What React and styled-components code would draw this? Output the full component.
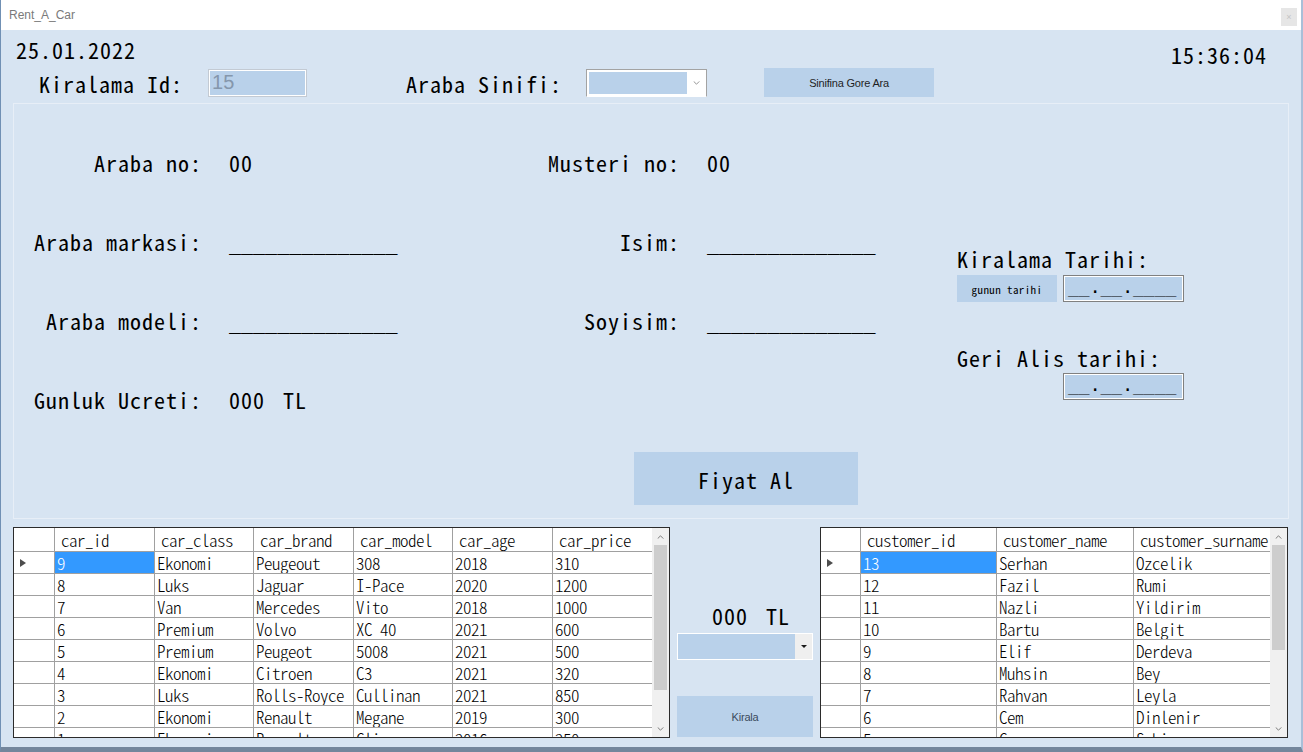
import React from 'react';
import styled, { createGlobalStyle, css } from 'styled-components';

const MONO = `"Noto Sans CJK JP", "DejaVu Sans Mono", monospace`;
const LINE_MONO = `"DejaVu Sans Mono", "Liberation Mono", monospace`;
const SANS = `"Liberation Sans", Arial, sans-serif`;

const GlobalStyle = createGlobalStyle`
  html, body { margin: 0; padding: 0; background: #ffffff; }
  body { font-family: ${SANS}; }
  #root { width: 1303px; height: 752px; }
  *, *::before, *::after { box-sizing: border-box; }
`;

const monoText = css`
  font-family: ${MONO};
  font-feature-settings: "hwid" 1;
  color: #000;
  white-space: pre;
`;

const Window = styled.div`
  width: 1303px;
  height: 752px;
  display: flex;
  flex-direction: column;
  border-left: 1px solid #7090b4;
  border-right: 2px solid #a9bfd8;
  border-bottom: 5px solid #74869c;
  overflow: hidden;
`;

const TitleBar = styled.div`
  height: 30px;
  flex-shrink: 0;
  display: flex;
  align-items: flex-start;
  background: #ffffff;
  padding-left: 8px;
`;

const TitleText = styled.span`
  font-family: ${SANS};
  font-size: 12px;
  line-height: 30px;
  color: #7a7a7a;
`;

const CloseBox = styled.div`
  margin-left: auto;
  margin-right: 4px;
  margin-top: 8px;
  width: 16px;
  height: 18px;
  background: #e6e6e6;
  color: #c4c4c4;
  font-size: 9px;
  line-height: 18px;
  text-align: center;
  font-family: ${SANS};
`;

const Client = styled.div`
  flex: 1;
  background: #d7e4f2;
  display: flex;
  flex-direction: column;
`;

const HeaderTop = styled.div`
  display: flex;
  align-items: flex-start;
  height: 30px;
  padding: 8px 34px 0 15px;
`;

const FormLabel = styled.span`
  ${monoText};
  display: block;
  font-size: 22px;
  line-height: 22px;
  letter-spacing: 1px;
  ${(p) => p.$offset !== undefined && css`margin-left: ${p.$offset}px;`}
  ${(p) => p.$wide && css`word-spacing: 6px;`}
`;

const Clock = styled(FormLabel)`
  margin-left: auto;
  margin-top: 5px;
`;

const ControlRow = styled.div`
  display: flex;
  align-items: center;
  height: 29px;
  margin-top: 8px;
  padding-left: 38px;
`;

const IdBox = styled.div`
  margin-left: 25px;
  width: 99px;
  height: 28px;
  border: 1px solid #c3cad3;
  box-shadow: inset 0 0 0 1px #ffffff;
  background: #b9d1ea;
  padding: 0 3px;
  font-family: ${SANS};
  font-size: 20px;
  line-height: 25px;
  color: #8597ac;
`;

const HeaderCombo = styled.div`
  margin-left: 24px;
  width: 121px;
  height: 28px;
  display: flex;
  border: 1px solid #a3a3a3;
  border-bottom-color: #ffffff;
  background: #ffffff;
  padding: 2px 1px 2px 2px;
`;

const ComboField = styled.div`
  flex: 1;
  background: #b9d1ea;
`;

const ComboArrow = styled.div`
  width: 18px;
  display: flex;
  align-items: center;
  justify-content: center;
`;

const ActionButton = styled.button`
  border: none;
  padding: 0;
  margin: 0;
  background: #b9d1ea;
  width: ${(p) => p.$w}px;
  height: ${(p) => p.$h}px;
  margin-left: ${(p) => p.$ml || 0}px;
  font-family: ${SANS};
  font-size: 11px;
  color: #1f1f1f;
  letter-spacing: -0.2px;
  display: flex;
  align-items: center;
  justify-content: center;
  flex-shrink: 0;
`;

const Panel = styled.div`
  margin: 6px 12px 0 12px;
  height: 416px;
  border: 1px solid #e7eef7;
  padding-top: 47px;
  display: flex;
  flex-direction: column;
`;

const FieldsGrid = styled.div`
  display: grid;
  grid-template-columns: 188px 218px 260px 250px 1fr;
  grid-template-rows: 79px 79px 79px 22px;
`;

const FieldLabel = styled(FormLabel)`
  text-align: right;
`;

const FieldValue = styled(FormLabel)`
  padding-left: 27px;
`;

const BlankValue = styled(FieldValue)`
  font-family: ${LINE_MONO};
  font-feature-settings: normal;
  font-size: 20px;
  letter-spacing: 0;
  line-height: 22px;
  padding-top: 2px;
`;

const DateColumn = styled.div`
  grid-column: 5;
  grid-row: 1 / 5;
  padding-left: 27px;
  display: flex;
  flex-direction: column;
`;

const DateLabel = styled(FormLabel)`
  margin-top: ${(p) => p.$top}px;
`;

const DateRow = styled.div`
  display: flex;
  margin-top: ${(p) => p.$top}px;
  padding-left: ${(p) => p.$indent || 0}px;
`;

const TodayButton = styled.button`
  ${monoText};
  border: none;
  padding: 0;
  width: 100px;
  height: 27px;
  background: #b9d1ea;
  font-size: 11px;
  letter-spacing: 0.4px;
  margin-right: 6px;
`;

const MaskedBox = styled.div`
  font-family: ${LINE_MONO};
  color: #000;
  white-space: pre;
  width: 121px;
  height: 27px;
  border: 1px solid #808080;
  box-shadow: inset 0 0 0 1px #ffffff;
  background: #b9d1ea;
  font-size: 18px;
  line-height: 22px;
  letter-spacing: 0;
  padding-left: 4px;
  overflow: hidden;
`;

const PriceButton = styled.button`
  ${monoText};
  border: none;
  padding: 0;
  margin: 42px 0 0 620px;
  width: 224px;
  height: 53px;
  background: #b9d1ea;
  font-size: 22px;
  letter-spacing: 1px;
`;

const BottomRow = styled.div`
  display: flex;
  gap: 7px;
  margin-top: 8px;
  padding-left: 12px;
  height: 211px;
`;

const GridFrame = styled.div`
  width: ${(p) => p.$w}px;
  height: 211px;
  border: 1px solid #2b2b2b;
  background: #ffffff;
  display: flex;
  overflow: hidden;
  flex-shrink: 0;
`;

const GridTable = styled.div`
  flex: 1;
  display: flex;
  flex-direction: column;
  overflow: hidden;
`;

const GridRow = styled.div`
  display: grid;
  grid-template-columns: ${(p) => p.$template};
  height: ${(p) => (p.$header ? 24 : 22)}px;
  flex-shrink: 0;
`;

const cellBase = css`
  ${monoText};
  font-size: 17px;
  font-weight: 300;
  letter-spacing: -0.5px;
  border-bottom: 1px solid #a0a0a0;
  overflow: hidden;
`;

const HeaderCell = styled.div`
  ${cellBase};
  line-height: 23px;
  padding-left: 6px;
  border-left: 1px solid #a0a0a0;
`;

const CornerCell = styled.div`
  border-bottom: 1px solid #a0a0a0;
`;

const RowHeaderCell = styled.div`
  border-bottom: 1px solid #a0a0a0;
  display: flex;
  align-items: center;
  padding-left: 6px;
`;

const CurrentMarker = styled.span`
  width: 0;
  height: 0;
  border-left: 6px solid #4d4d4d;
  border-top: 4.5px solid transparent;
  border-bottom: 4.5px solid transparent;
`;

const DataCell = styled.div`
  ${cellBase};
  line-height: 21px;
  padding-left: 2px;
  border-left: 1px solid #a0a0a0;
  ${(p) =>
    p.$selected &&
    css`
      background: #3399ff;
      color: #ffffff;
    `}
`;

const VScroll = styled.div`
  width: 17px;
  flex-shrink: 0;
  background: #f0f0f0;
  display: flex;
  flex-direction: column;
`;

const ScrollArrow = styled.div`
  height: 17px;
  display: flex;
  align-items: center;
  justify-content: center;
  flex-shrink: 0;
`;

const ScrollTrack = styled.div`
  flex: 1;
  padding: 0 2px;
`;

const ScrollThumb = styled.div`
  background: #cdcdcd;
`;

const MiddleColumn = styled.div`
  width: 136px;
  display: flex;
  flex-direction: column;
  padding-top: 77px;
  padding-bottom: 1px;
`;

const MiddlePrice = styled(FormLabel)`
  padding-left: 35px;
`;

const FlatCombo = styled.div`
  margin-top: 7px;
  height: 27px;
  display: flex;
  border: 1px solid #ffffff;
  background: #b9d1ea;
`;

const FlatComboArrow = styled.div`
  width: 17px;
  margin-left: auto;
  background: #efefef;
  display: flex;
  align-items: center;
  justify-content: center;
`;

const TinyTriangle = styled.span`
  width: 0;
  height: 0;
  border-top: 3px solid #1a1a1a;
  border-left: 3px solid transparent;
  border-right: 3px solid transparent;
`;

const RentButton = styled(ActionButton)`
  margin-top: auto;
  width: 136px;
  color: #3b4a5c;
  font-size: 11px;
`;

const Chevron = ({ dir = 'down', color = '#606060', w = 8, h = 5 }) => (
  <svg width={w} height={h} viewBox="0 0 8 5">
    {dir === 'down' ? (
      <polyline points="0.5,0.5 4,4 7.5,0.5" fill="none" stroke={color} strokeWidth="1" />
    ) : (
      <polyline points="0.5,4.5 4,1 7.5,4.5" fill="none" stroke={color} strokeWidth="1" />
    )}
  </svg>
);

function DataGrid({ width, rowHeaderWidth, columns, rows, thumb }) {
  const template = `${rowHeaderWidth}px ${columns.map((c) => `${c.width}px`).join(' ')}`;
  return (
    <GridFrame $w={width}>
      <GridTable>
        <GridRow $template={template} $header>
          <CornerCell />
          {columns.map((c) => (
            <HeaderCell key={c.key}>{c.key}</HeaderCell>
          ))}
        </GridRow>
        {rows.map((r, i) => (
          <GridRow key={i} $template={template}>
            <RowHeaderCell>{i === 0 && <CurrentMarker />}</RowHeaderCell>
            {r.map((v, j) => (
              <DataCell key={j} $selected={i === 0 && j === 0}>
                {v}
              </DataCell>
            ))}
          </GridRow>
        ))}
      </GridTable>
      <VScroll>
        <ScrollArrow>
          <Chevron dir="up" w={7} h={4} />
        </ScrollArrow>
        <ScrollTrack>
          <ScrollThumb style={{ height: thumb }} />
        </ScrollTrack>
        <ScrollArrow>
          <Chevron dir="down" w={7} h={4} />
        </ScrollArrow>
      </VScroll>
    </GridFrame>
  );
}

const carColumns = [
  { key: 'car_id', width: 100 },
  { key: 'car_class', width: 99 },
  { key: 'car_brand', width: 100 },
  { key: 'car_model', width: 99 },
  { key: 'car_age', width: 100 },
  { key: 'car_price', width: 100 },
];

const cars = [
  ['9', 'Ekonomi', 'Peugeout', '308', '2018', '310'],
  ['8', 'Luks', 'Jaguar', 'I-Pace', '2020', '1200'],
  ['7', 'Van', 'Mercedes', 'Vito', '2018', '1000'],
  ['6', 'Premium', 'Volvo', 'XC 40', '2021', '600'],
  ['5', 'Premium', 'Peugeot', '5008', '2021', '500'],
  ['4', 'Ekonomi', 'Citroen', 'C3', '2021', '320'],
  ['3', 'Luks', 'Rolls-Royce', 'Cullinan', '2021', '850'],
  ['2', 'Ekonomi', 'Renault', 'Megane', '2019', '300'],
  ['1', 'Ekonomi', 'Renault', 'Clio', '2016', '250'],
];

const customerColumns = [
  { key: 'customer_id', width: 136 },
  { key: 'customer_name', width: 137 },
  { key: 'customer_surname', width: 137 },
];

const customers = [
  ['13', 'Serhan', 'Ozcelik'],
  ['12', 'Fazil', 'Rumi'],
  ['11', 'Nazli', 'Yildirim'],
  ['10', 'Bartu', 'Belgit'],
  ['9', 'Elif', 'Derdeva'],
  ['8', 'Muhsin', 'Bey'],
  ['7', 'Rahvan', 'Leyla'],
  ['6', 'Cem', 'Dinlenir'],
  ['5', 'Can', 'Sahin'],
];

const blank = '______________';

export default function App() {
  return (
    <>
      <GlobalStyle />
      <Window>
        <TitleBar>
          <TitleText>Rent_A_Car</TitleText>
          <CloseBox>×</CloseBox>
        </TitleBar>
        <Client>
          <HeaderTop>
            <FormLabel>25.01.2022</FormLabel>
            <Clock>15:36:04</Clock>
          </HeaderTop>
          <ControlRow>
            <FormLabel>Kiralama Id:</FormLabel>
            <IdBox>15</IdBox>
            <FormLabel $offset={99}>Araba Sinifi:</FormLabel>
            <HeaderCombo>
              <ComboField />
              <ComboArrow>
                <Chevron dir="down" color="#7a7a7a" w={7} h={4} />
              </ComboArrow>
            </HeaderCombo>
            <ActionButton $w={170} $h={29} $ml={57}>
              Sinifina Gore Ara
            </ActionButton>
          </ControlRow>

          <Panel>
            <FieldsGrid>
              <DateColumn>
                <DateLabel $top={96}>Kiralama Tarihi:</DateLabel>
                <DateRow $top={6}>
                  <TodayButton>gunun tarihi</TodayButton>
                  <MaskedBox>__.__.____</MaskedBox>
                </DateRow>
                <DateLabel $top={44}>Geri Alis tarihi:</DateLabel>
                <DateRow $top={5} $indent={106}>
                  <MaskedBox>__.__.____</MaskedBox>
                </DateRow>
              </DateColumn>

              <FieldLabel>Araba no:</FieldLabel>
              <FieldValue>00</FieldValue>
              <FieldLabel>Musteri no:</FieldLabel>
              <FieldValue>00</FieldValue>

              <FieldLabel>Araba markasi:</FieldLabel>
              <BlankValue>{blank}</BlankValue>
              <FieldLabel>Isim:</FieldLabel>
              <BlankValue>{blank}</BlankValue>

              <FieldLabel>Araba modeli:</FieldLabel>
              <BlankValue>{blank}</BlankValue>
              <FieldLabel>Soyisim:</FieldLabel>
              <BlankValue>{blank}</BlankValue>

              <FieldLabel>Gunluk Ucreti:</FieldLabel>
              <FieldValue $wide>000 TL</FieldValue>
            </FieldsGrid>
            <PriceButton>Fiyat Al</PriceButton>
          </Panel>

          <BottomRow>
            <DataGrid width={657} rowHeaderWidth={40} columns={carColumns} rows={cars} thumb={145} />
            <MiddleColumn>
              <MiddlePrice $wide>000 TL</MiddlePrice>
              <FlatCombo>
                <FlatComboArrow>
                  <TinyTriangle />
                </FlatComboArrow>
              </FlatCombo>
              <RentButton $w={136} $h={41}>
                Kirala
              </RentButton>
            </MiddleColumn>
            <DataGrid width={468} rowHeaderWidth={39} columns={customerColumns} rows={customers} thumb={105} />
          </BottomRow>
        </Client>
      </Window>
    </>
  );
}
